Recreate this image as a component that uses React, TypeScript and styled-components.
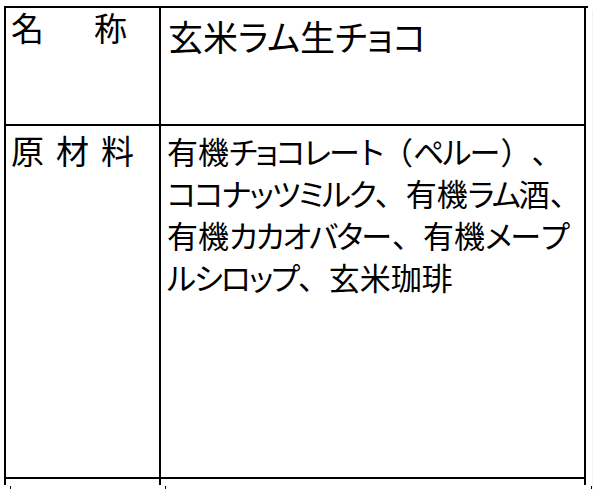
import React from "react";
import styled, { createGlobalStyle } from "styled-components";

const Global = createGlobalStyle`
  html, body {
    margin: 0;
    padding: 0;
    background: #ffffff;
  }
  body {
    font-family: "Noto Sans CJK JP", "Noto Sans", sans-serif;
    color: #000000;
    text-spacing-trim: space-all;
  }
`;

const Page = styled.div`
  position: relative;
  width: 601px;
  height: 489px;
  overflow: hidden;
  padding: 6px 0 0 4px;
  box-sizing: border-box;
`;

const Table = styled.div`
  display: grid;
  grid-template-columns: 155px 425px;
  grid-template-rows: 118px 353px 6px;
  width: 582px;
  border-top: 2px solid #000;
  border-left: 2px solid #000;
  box-sizing: content-box;
`;

const Cell = styled.div<{ $last?: boolean }>`
  border-right: 2px solid #000;
  border-bottom: ${(p) => (p.$last ? "0" : "2px solid #000")};
  box-sizing: border-box;
`;

const Label = styled.div<{ $gap: number; $top: number }>`
  display: flex;
  gap: ${(p) => p.$gap}px;
  padding: ${(p) => p.$top}px 0 0 5px;
  font-size: 33px;
  line-height: 1.2;
  white-space: nowrap;
`;

const Title = styled.div`
  padding: 7px 0 0 7px;
  font-size: 35px;
  line-height: 1.2;
  white-space: nowrap;
`;

const Body = styled.div`
  padding: 4px 0 0 6px;
  font-size: 31px;
  line-height: 42px;
`;

const Line = styled.div`
  white-space: nowrap;
`;

const Kana = styled.span<{ $squeeze: number }>`
  font-feature-settings: "palt";
  letter-spacing: ${(p) => p.$squeeze}px;
`;

const NextTable = styled.div`
  display: grid;
  grid-template-columns: 155px 426px;
  height: 8px;
  margin-left: 6px;
  margin-top: 1px;
  width: 581px;
  border-left: 1px solid #000;
`;

const NextCell = styled.div`
  border-right: 1px solid #000;
`;

const Edge = styled.div`
  position: absolute;
  left: 592px;
  top: 10px;
  bottom: 0;
  width: 1px;
  background: #f2f2f2;
`;

const isKana = (c: string) => /[\u30A0-\u30FF\u3040-\u309F]/.test(c) && c !== "ー";

function Runs({ text, squeeze }: { text: string; squeeze: number }) {
  const parts: { kana: boolean; s: string }[] = [];
  for (const ch of text) {
    const k = isKana(ch);
    const last = parts[parts.length - 1];
    if (last && last.kana === k) last.s += ch;
    else parts.push({ kana: k, s: ch });
  }
  return (
    <>
      {parts.map((p, i) =>
        p.kana ? (
          <Kana key={i} $squeeze={squeeze}>
            {p.s}
          </Kana>
        ) : (
          <React.Fragment key={i}>{p.s}</React.Fragment>
        )
      )}
    </>
  );
}

const lines = [
  "有機チョコレート（ペルー）、",
  "ココナッツミルク、有機ラム酒、",
  "有機カカオバター、有機メープ",
  "ルシロップ、玄米珈琲",
];

export default function App() {
  return (
    <>
      <Global />
      <Page>
        <Table>
          <Cell>
            <Label $gap={50} $top={0}>
              <span>名</span>
              <span>称</span>
            </Label>
          </Cell>
          <Cell>
            <Title>
              <Runs text="玄米ラム生チョコ" squeeze={0} />
            </Title>
          </Cell>
          <Cell>
            <Label $gap={12} $top={5}>
              <span>原</span>
              <span>材</span>
              <span>料</span>
            </Label>
          </Cell>
          <Cell>
            <Body>
              {lines.map((l) => (
                <Line key={l}>
                  <Runs text={l} squeeze={-2} />
                </Line>
              ))}
            </Body>
          </Cell>
          <Cell $last />
          <Cell $last />
        </Table>
        <NextTable>
          <NextCell />
          <NextCell />
        </NextTable>
        <Edge />
      </Page>
    </>
  );
}
